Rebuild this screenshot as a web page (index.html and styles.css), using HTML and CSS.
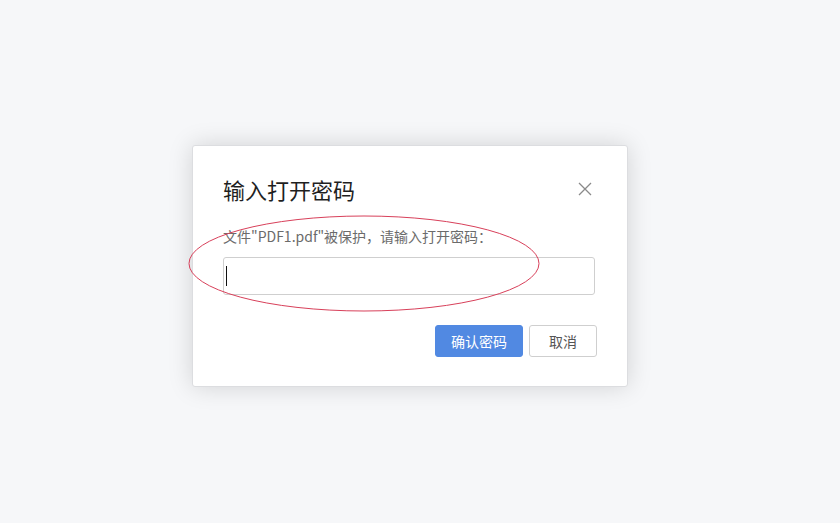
FILE: index.html
```html
<!DOCTYPE html>
<html lang="zh-CN">
<head>
<meta charset="utf-8">
<title>输入打开密码</title>
<link rel="stylesheet" href="styles.css">
</head>
<body>
<div class="dialog">
  <div class="dialog-header">
    <h1 class="dialog-title">输入打开密码</h1>
    <button class="close-btn" aria-label="关闭">
      <svg width="14" height="14" viewBox="0 0 14 14"><path d="M1 1L13 13M13 1L1 13" stroke="#8a8a8a" stroke-width="1.3" fill="none"/></svg>
    </button>
  </div>
  <p class="dialog-desc">文件"PDF1.pdf"被保护，请输入打开密码：</p>
  <div class="password-field"><span class="caret"></span></div>
  <div class="dialog-footer">
    <button class="btn btn-primary">确认密码</button>
    <button class="btn btn-default">取消</button>
  </div>
</div>
<svg class="annotation" width="840" height="523" viewBox="0 0 840 523">
  <ellipse cx="364" cy="263.5" rx="175" ry="47.5" fill="none" stroke="#d8405a" stroke-width="1"/>
</svg>
</body>
</html>
```

FILE: styles.css
```css
html, body {
  margin: 0;
  padding: 0;
}

body {
  width: 840px;
  height: 523px;
  background: #f6f7f9;
  font-family: "Noto Sans CJK SC", "Noto Sans", sans-serif;
  overflow: hidden;
  position: relative;
}

.dialog {
  box-sizing: border-box;
  width: 436px;
  height: 242px;
  margin: 145px 0 0 192px;
  padding: 29px 32px 29px 30px;
  background: #ffffff;
  border: 1px solid #dcdde0;
  border-radius: 3px;
  box-shadow: 0 0 24px rgba(0, 0, 0, 0.15);
  display: flex;
  flex-direction: column;
}

.dialog-header {
  display: flex;
  align-items: center;
  justify-content: space-between;
  height: 28px;
}

.dialog-title {
  margin: 0;
  font-size: 22px;
  line-height: 28px;
  font-weight: 400;
  color: #1f1f1f;
}

.close-btn {
  border: 0;
  background: none;
  padding: 0;
  margin-right: 3px;
  width: 14px;
  height: 14px;
  display: flex;
}

.dialog-desc {
  margin: 23px 0 0;
  font-size: 14px;
  line-height: 20px;
  color: #6b6b6b;
}

.password-field {
  box-sizing: border-box;
  margin-top: 11px;
  height: 38px;
  border: 1px solid #cfcfcf;
  border-radius: 3px;
  display: flex;
  align-items: center;
  padding-left: 2px;
}

.caret {
  width: 1px;
  height: 20px;
  background: #111;
}

.dialog-footer {
  margin-top: 30px;
  margin-right: -2px;
  display: flex;
  justify-content: flex-end;
  gap: 6px;
}

.btn {
  box-sizing: border-box;
  height: 32px;
  border-radius: 3px;
  font-family: inherit;
  font-size: 14px;
  line-height: 20px;
  padding: 0;
  cursor: pointer;
}

.btn-primary {
  width: 88px;
  background: #5189e2;
  border: 1px solid #5189e2;
  color: #ffffff;
}

.btn-default {
  width: 68px;
  background: #ffffff;
  border: 1px solid #cfcfcf;
  color: #555555;
}

.annotation {
  position: absolute;
  left: 0;
  top: 0;
  pointer-events: none;
}
```
